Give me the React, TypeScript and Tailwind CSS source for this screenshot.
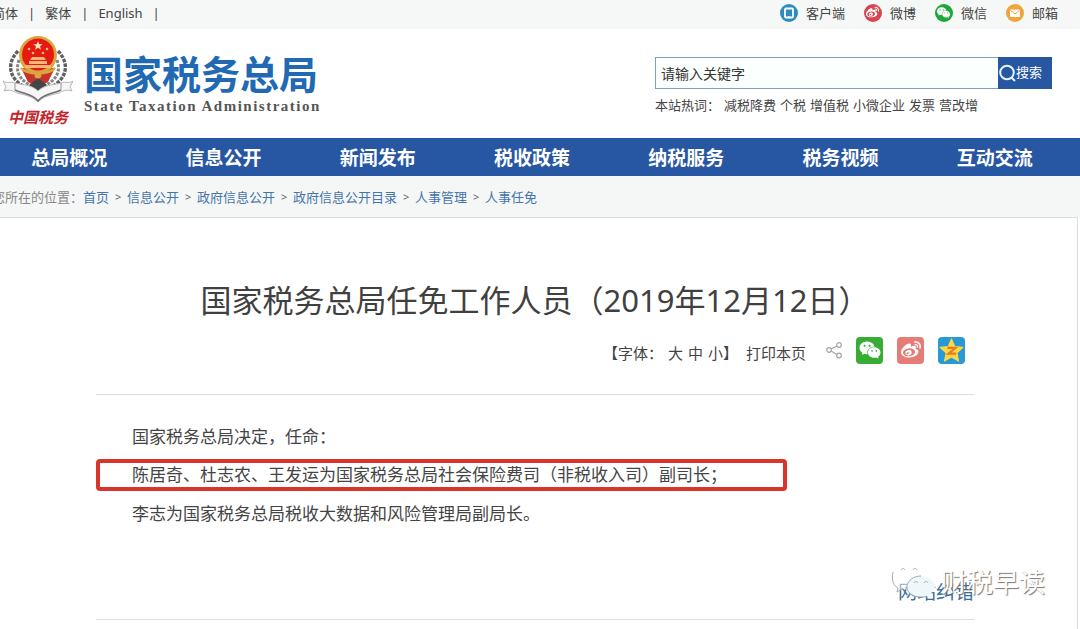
import type { ReactNode } from 'react'
import { AiFillWechat } from 'react-icons/ai'
import { FaWeibo } from 'react-icons/fa'

const navItems = ['总局概况', '信息公开', '新闻发布', '税收政策', '纳税服务', '税务视频', '互动交流']
const crumbs = ['首页', '信息公开', '政府信息公开', '政府信息公开目录', '人事管理', '人事任免']
const hotWords = ['减税降费', '个税', '增值税', '小微企业', '发票', '营改增']

export default function App() {
  return (
    <div className="flex min-h-screen flex-col overflow-hidden bg-white font-['Noto_Sans','Noto_Sans_CJK_SC',sans-serif] text-[#444]">
      <TopBar />
      <Header />
      <nav className="bg-[#2757a2]">
        <ul className="-ml-2 mr-2 grid grid-cols-7">
          {navItems.map((item) => (
            <li key={item} className="text-center">
              <a href="#" className="block h-[38px] text-[19px] leading-[40px] font-bold whitespace-nowrap text-white">
                {item}
              </a>
            </li>
          ))}
        </ul>
      </nav>
      <Breadcrumb />
      <Article />
    </div>
  )
}

function TopBar() {
  return (
    <div className="flex h-[29px] items-center justify-between bg-[#f6f7f7] text-[13px] leading-5">
      <div className="mb-1 -ml-2 flex items-center gap-[10px] whitespace-nowrap">
        <a href="#">简体</a>
        <span>|</span>
        <a href="#">繁体</a>
        <span>|</span>
        <a href="#">English</a>
        <span>|</span>
      </div>
      <div className="mb-1 flex items-center gap-[19px] pr-[22px]">
        <TopLink label="客户端" color="bg-[#2b8dbd]">
          <svg viewBox="0 0 18 18" className="size-[18px]">
            <rect x="5" y="4.5" width="8" height="9" rx="1" fill="none" stroke="#fff" strokeWidth="1.8" />
            <path d="M7.5 13.3h3" stroke="#fff" strokeWidth="1.8" />
          </svg>
        </TopLink>
        <TopLink label="微博" color="bg-[#d64550]">
          <FaWeibo className="size-[13px]" />
        </TopLink>
        <TopLink label="微信" color="bg-[#1da838]">
          <AiFillWechat className="size-[15px]" />
        </TopLink>
        <TopLink label="邮箱" color="bg-[#eea63c]">
          <svg viewBox="0 0 18 18" className="size-[18px]">
            <rect x="4" y="5.5" width="10" height="7.5" rx="1" fill="#fff" />
            <path d="M4.5 6.5 9 9.8l4.5-3.3" fill="none" stroke="#eea63c" />
          </svg>
        </TopLink>
      </div>
    </div>
  )
}

function TopLink({ label, color, children }: { label: string; color: string; children: ReactNode }) {
  return (
    <a href="#" className="flex items-center gap-2 whitespace-nowrap">
      <span className={`flex size-[18px] items-center justify-center rounded-full text-white ${color}`}>
        {children}
      </span>
      <span>{label}</span>
    </a>
  )
}

function Header() {
  return (
    <header className="flex justify-between pr-7 pb-2">
      <a href="#" className="flex gap-3 pt-[6px] pl-1">
        <span className="flex w-[68px] flex-col items-center gap-[3px]">
          <Emblem />
          <span className="font-['Liberation_Serif','Noto_Sans_CJK_SC',serif] text-[15px] leading-6 font-bold whitespace-nowrap text-[#c4262c] italic">
            中国税务
          </span>
        </span>
        <span className="flex flex-col pt-[19px]">
          <span className="text-[39px] leading-10 font-bold whitespace-nowrap text-[#2169b3]">国家税务总局</span>
          <span className="pt-[2px] font-['Liberation_Serif',serif] text-[15px] leading-5 font-bold tracking-widest whitespace-nowrap text-[#555]">
            State Taxation Administration
          </span>
        </span>
      </a>
      <div className="w-[397px] pt-7">
        <form className="flex h-8 border border-[#7ba3b3]">
          <input
            type="text"
            aria-label="关键字"
            placeholder="请输入关键字"
            className="min-w-0 flex-1 bg-[#fbfffe] px-[5px] text-[14px] outline-none placeholder:text-[#333]"
          />
          <button type="button" className="-my-px -mr-px flex w-[54px] items-center bg-[#2757a2] text-[13px] text-white">
            <svg viewBox="0 0 18 18" className="size-[18px]" fill="none" stroke="#e2f5ff" strokeWidth="2">
              <circle cx="9" cy="8.5" r="6.8" />
              <path d="m13.5 13.5 3.5 3.5" />
            </svg>
            搜索
          </button>
        </form>
        <p className="flex gap-1 pt-[6px] text-[13px] leading-5 whitespace-nowrap">
          <span>本站热词：</span>
          {hotWords.map((word) => (
            <a key={word} href="#">{word}</a>
          ))}
        </p>
      </div>
    </header>
  )
}

function Emblem() {
  return (
    <svg viewBox="0 0 70 68" className="h-[68px] w-[70px]" fill="none">
      {/* wheat ears */}
      <g stroke="#606060" strokeWidth="3.4" strokeDasharray="3.6 1.2">
        <path d="M15 16C4 27 4 44 24 53" />
        <path d="M55 16c11 11 11 28-9 37" />
      </g>
      <g stroke="#858585" strokeWidth="3" strokeDasharray="3 1.3">
        <path d="M16 25c-4 11 0 20 13 26" />
        <path d="M54 25c4 11 0 20-13 26" />
      </g>
      <path d="M18 33h34l-7 14-10 5-10-5z" fill="#c6332a" />
      <path d="m26 50 9-7 9 7-9 6z" fill="#454545" />
      {/* open book with ribbon ends */}
      <path
        d="M0 46c4 3 8 0 12 2 9 2 17 2 23 8 6-6 14-6 23-8 4-2 8 1 12-2l-3 6 2 4c-6-2-9 0-13 2-8 2-15 3-21 9-6-6-13-7-21-9-4-2-7-4-13-2l2-4z"
        fill="#f6f6f6"
        stroke="#b5b5b5"
      />
      <path d="M12 55c9 4 18 4 23 11 5-7 14-7 23-11" stroke="#6e6e6e" strokeWidth="1.5" />
      <path d="M12 48v7M58 48v7" stroke="#999" />
      <circle cx="35" cy="20" r="19" fill="#dba53f" />
      <circle cx="35" cy="19.5" r="16" fill="#e51b12" />
      <path d="m35 6 1.3 3.2h3.4l-2.7 2.1 1 3.4-3-2-3 2 1-3.4-2.7-2.1h3.4z" fill="#ffe3bd" />
      <g fill="#f8b678">
        <circle cx="26" cy="14" r="1.3" />
        <circle cx="44" cy="14" r="1.3" />
        <circle cx="30" cy="18" r="1.3" />
        <circle cx="40" cy="18" r="1.3" />
        <path d="M29 22h12l2 3H27zM26 26h18v3H26zM22 30h26v3H22z" />
      </g>
      <path d="M18 33c5 7 29 7 34 0" stroke="#dba53f" strokeWidth="2.5" />
      <circle cx="35" cy="40" r="3.5" fill="#dba53f" />
    </svg>
  )
}

function Breadcrumb() {
  return (
    <div className="flex h-[41px] items-center bg-[#f5f7f7] text-[13px] leading-5 whitespace-nowrap">
      <span className="-ml-2 text-[#888]">您所在的位置：</span>
      <ol className="flex text-[#4674ad]">
        {crumbs.map((crumb, i) => (
          <li key={crumb} className="flex">
            {i > 0 && <span className="w-[18px] text-center text-[11px] text-[#666]">&gt;</span>}
            <a href="#">{crumb}</a>
          </li>
        ))}
      </ol>
    </div>
  )
}

function Article() {
  return (
    <main className="mr-[2px] flex-1 border-t border-r border-[#dcdfe2] pr-[103px] pl-24">
      <h1 className="pt-[57px] text-center text-[31px] leading-[50px] whitespace-nowrap text-[#404040]">
        国家税务总局任免工作人员（2019年12月12日）
      </h1>
      <div className="flex items-center justify-end border-b border-[#dcdce2] pt-[11px] pr-[9px] pb-[29px] text-[15px] whitespace-nowrap">
        <div className="flex gap-[5px] pt-[6px]">
          <span>【字体：</span>
          <button type="button">大</button>
          <button type="button">中</button>
          <span>
            <button type="button">小</button>】
          </span>
        </div>
        <button type="button" className="ml-2 pt-[6px]">打印本页</button>
        <div className="ml-5 flex items-center gap-[14px]">
          <svg viewBox="0 0 16 18" className="h-[18px] w-4" fill="none" stroke="#a5a5a5" strokeWidth="1.2">
            <circle cx="3" cy="9" r="2.3" />
            <circle cx="13" cy="4" r="2.3" />
            <circle cx="13" cy="14.5" r="2.3" />
            <path d="m5 8 6-3M5 10l6 3.5" />
          </svg>
          <a href="#" aria-label="微信" className="flex size-[27px] items-center justify-center rounded-sm bg-[#37ad35] text-white">
            <AiFillWechat className="size-6" />
          </a>
          <a href="#" aria-label="微博" className="flex size-[27px] items-center justify-center rounded-sm bg-[#e67c75] text-white">
            <FaWeibo className="size-5" />
          </a>
          <a href="#" aria-label="QQ空间" className="flex size-[27px] items-center justify-center rounded-sm bg-[#2899d4]">
            <svg viewBox="0 0 24 24" className="size-[25px]">
              <path
                d="m12 1 3.2 7.2 7.8.8-5.8 5.3 1.6 7.9-6.8-3.900-6.800 3.900 1.600-7.900L1 9l7.800-.8z"
                fill="#fcd844"
                stroke="#fcd844"
                strokeLinejoin="round"
              />
              <path d="M8 9.500h8l-7 5.500h7.500" fill="none" stroke="#ed7924" strokeWidth="2" />
            </svg>
          </a>
        </div>
      </div>
      <div className="border-b border-[#dcdce2] pt-[22px] text-[17px] leading-[39px]">
        <p className="pl-9">国家税务总局决定，任命：</p>
        {/* highlighted appointment */}
        <p className="my-[3px] mr-[187px] rounded-sm border-4 border-[#d9362b] pl-8 leading-6 whitespace-nowrap">
          陈居奇、杜志农、王发运为国家税务总局社会保险费司（非税收入司）副司长；
        </p>
        <p className="pl-9">李志为国家税务总局税收大数据和风险管理局副局长。</p>
        <div className="relative flex justify-end pt-[43px] pb-[11px]">
          <a href="#" className="text-[19px] leading-8 text-[#3b6e99]">网站纠错</a>
          <Watermark />
        </div>
      </div>
    </main>
  )
}

function Watermark() {
  return (
    <div className="pointer-events-none absolute right-[-71px] bottom-[19px] flex items-center gap-1">
      <svg viewBox="0 0 46 36" className="h-9 w-[46px]" fill="#fff" stroke="#aaa">
        <path d="M17 3C8 3 1 8 1 15c0 4 2 7 6 9l-1 4 5-3c3 1 9 1 12 0 6-2 10-5 10-10 0-7-7-12-16-12z" stroke="none" fillOpacity=".5" />
        <path d="M2 8C0 17 3 22 7 24l-1 4 5-3" fill="none" />
        <path d="M30 12c-8 0-14 5-14 11s6 10 14 10c2 0 4 0 6-1l4 2-1-4c3-2 5-4 5-7 0-6-6-11-14-11z" fill="#eef8fb" stroke="none" />
        <path d="M30 12c-8 0-14 5-14 11s6 10 14 10c2 0 4 0 6-1" fill="none" />
        <path d="M10 6c1-2 3-2 4 0M22 6c1-2 3-2 4 0M23 19c1-2 3-2 4 0M33 19c1-2 3-2 4 0" fill="none" />
      </svg>
      <span className="text-[26px] leading-9 whitespace-nowrap text-white [text-shadow:1px_1px_1px_#777]">财税早读</span>
    </div>
  )
}
